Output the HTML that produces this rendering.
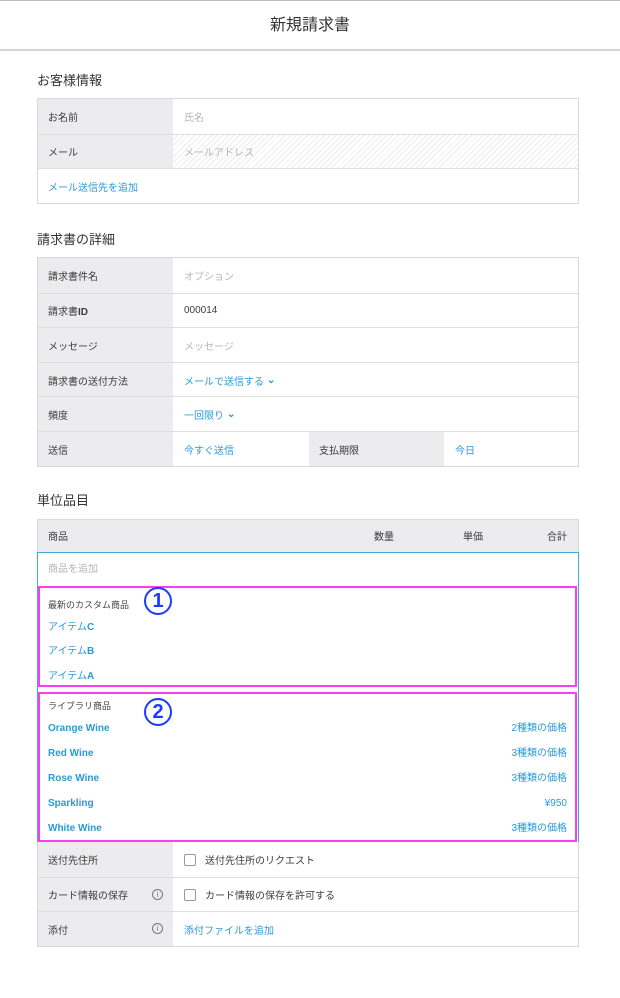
<!DOCTYPE html>
<html><head><meta charset="utf-8"><style>
*{box-sizing:border-box;margin:0;padding:0}
body{width:620px;height:998px;background:#fff;font-family:"Liberation Sans","Noto Sans CJK JP",sans-serif;position:relative;overflow:hidden;color:#3c3c3c}
.a{position:absolute}
.hdr{left:0;top:0;width:620px;height:51px;border-top:1px solid #bbb;border-bottom:2px solid #d4d4d4;text-align:center;font-size:16px;line-height:49px;color:#333}
.st{left:37px;font-size:13px;color:#333;line-height:16px}
.tb{left:37px;width:542px;border:1px solid #d9d9d9}
.r{position:relative;height:34.6px;border-top:1px solid #dedede;display:flex;font-size:10px;align-items:center}
.r:first-child{border-top:none}
.l{width:135px;height:100%;background:#ececee;padding-left:10px;display:flex;align-items:center;position:relative;padding-top:1px}
.v{padding-left:11px;flex:1;height:100%;display:flex;align-items:center;padding-top:1px}
.ph{color:#b5b5b5}
.bl{color:#2a9ad6}
.info{position:absolute;right:10px;top:11px;width:11px;height:11px;border:1px solid #777;border-radius:50%;font-size:8px;line-height:9px;text-align:center;color:#777}
.cb{width:12px;height:12px;border:1px solid #999;border-radius:2px;margin-right:9px}
.mg{border:2px solid #ff3cf5}
.it{font-size:10px;position:absolute;left:8px;line-height:12px}
.rt{left:auto;right:8px}
.circ{position:absolute;width:28px;height:28px;border:2px solid #1a3cff;border-radius:50%;color:#1a3cff;font-size:20px;font-weight:bold;text-align:center;line-height:24px}
</style></head><body>
<div class="a hdr">新規請求書</div>

<div class="a st" style="top:73px">お客様情報</div>
<div class="a tb" style="top:98px">
 <div class="r"><div class="l">お名前</div><div class="v ph">氏名</div></div>
 <div class="r"><div class="l">メール</div><div class="v ph" style="background:repeating-linear-gradient(135deg,#fff 0 3px,#ececec 3px 4px)">メールアドレス</div></div>
 <div class="r"><div class="v bl" style="padding-left:10px">メール送信先を追加</div></div>
</div>

<div class="a st" style="top:232px">請求書の詳細</div>
<div class="a tb" style="top:257px">
 <div class="r"><div class="l">請求書件名</div><div class="v ph">オプション</div></div>
 <div class="r"><div class="l"><span>請求書<b>ID</b></span></div><div class="v">000014</div></div>
 <div class="r"><div class="l">メッセージ</div><div class="v ph">メッセージ</div></div>
 <div class="r"><div class="l">請求書の送付方法</div><div class="v bl">メールで送信する <b style="margin-left:3px">⌄</b></div></div>
 <div class="r"><div class="l">頻度</div><div class="v bl">一回限り <b style="margin-left:3px">⌄</b></div></div>
 <div class="r"><div class="l">送信</div><div class="v bl" style="flex:none;width:136px">今すぐ送信</div><div class="l">支払期限</div><div class="v bl">今日</div></div>
</div>

<div class="a st" style="top:493px">単位品目</div>
<div class="a tb" style="top:519px;height:34px;background:#ececee;font-size:10px;line-height:12px">
 <span class="a" style="left:10px;top:12px">商品</span>
 <span class="a" style="left:336px;top:12px">数量</span>
 <span class="a" style="left:425px;top:12px">単価</span>
 <span class="a" style="right:11px;top:12px">合計</span>
</div>
<div class="a" style="left:37px;top:552px;width:542px;height:291px;border:1px solid #45a8dc;border-bottom:none"></div>
<div class="a ph" style="left:48px;top:564px;font-size:10px;line-height:12px">商品を追加</div>
<div class="a mg" style="left:38px;top:586px;width:539px;height:101px">
 <span class="it" style="top:11px;font-size:9px;color:#444">最新のカスタム商品</span>
 <span class="it bl" style="top:34px">アイテム<b>C</b></span>
 <span class="it bl" style="top:58px">アイテム<b>B</b></span>
 <span class="it bl" style="top:83px">アイテム<b>A</b></span>
 <div class="circ" style="left:104px;top:-1px">1</div>
</div>
<div class="a mg" style="left:38px;top:692px;width:539px;height:150px">
 <span class="it" style="top:6px;font-size:9px;color:#444">ライブラリ商品</span>
 <div class="circ" style="left:104px;top:4px">2</div>
 <b class="it bl" style="top:29px">Orange Wine</b><span class="it bl rt" style="top:29px">2種類の価格</span>
 <b class="it bl" style="top:54px">Red Wine</b><span class="it bl rt" style="top:54px">3種類の価格</span>
 <b class="it bl" style="top:79px">Rose Wine</b><span class="it bl rt" style="top:79px">3種類の価格</span>
 <b class="it bl" style="top:104px">Sparkling</b><span class="it bl rt" style="top:104px">¥950</span>
 <b class="it bl" style="top:129px">White Wine</b><span class="it bl rt" style="top:129px">3種類の価格</span>
</div>
<div class="a tb" style="top:842px;border-top:none">
 <div class="r" style="border-top:none"><div class="l">送付先住所</div><div class="v"><span class="cb"></span>送付先住所のリクエスト</div></div>
 <div class="r"><div class="l">カード情報の保存<span class="info">i</span></div><div class="v"><span class="cb"></span>カード情報の保存を許可する</div></div>
 <div class="r"><div class="l">添付<span class="info">i</span></div><div class="v bl">添付ファイルを追加</div></div>
</div>
</body></html>
